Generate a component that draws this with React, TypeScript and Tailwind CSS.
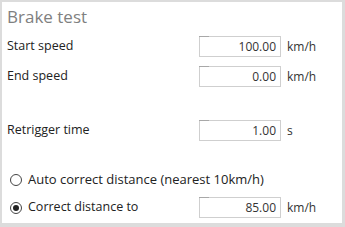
const font = { fontFamily: '"Open Sans", "Noto Sans", sans-serif' };

function NumberField({ value, unit }: { value: string; unit: string }) {
  return (
    <div className="flex items-center">
      <div className="relative w-[82px] h-[21px] border border-[#cfcfcf] bg-white flex items-center justify-end pr-[4px] text-[12px] text-[#333]">
        <span className="absolute left-[-1px] top-[-1px] w-[10px] h-[1px] bg-[#a8a8a8]" />
        {value}
      </div>
      <span className="ml-[6px] text-[12px] text-[#333]">{unit}</span>
    </div>
  );
}

function Row({ label, value, unit, className }: { label: string; value: string; unit: string; className: string }) {
  return (
    <div className={`flex items-center justify-between h-[21px] ${className}`}>
      <span className="text-[12.5px] text-[#222]">{label}</span>
      <div className="w-[138px]">
        <NumberField value={value} unit={unit} />
      </div>
    </div>
  );
}

function Radio({ checked }: { checked: boolean }) {
  return (
    <span className="w-[12px] h-[12px] rounded-full border border-[#444] bg-white flex items-center justify-center">
      {checked && <span className="w-[6px] h-[6px] rounded-full bg-[#222]" />}
    </span>
  );
}

export default function App() {
  return (
    <div className="w-[345px] h-[227px] bg-[#dcdcdc] pt-[2px] pl-[2px] pr-[3px] pb-[4px]" style={font}>
      <div className="w-full h-full bg-white px-[5px]">
        <div className="h-[28px] flex items-end text-[17px] text-[#808080] leading-none pb-[5px]">Brake test</div>
        <Row label="Start speed" value="100.00" unit="km/h" className="mt-[6px]" />
        <Row label="End speed" value="0.00" unit="km/h" className="mt-[9px]" />
        <Row label="Retrigger time" value="1.00" unit="s" className="mt-[33px]" />
        <div className="flex items-center h-[21px] mt-[28px] pl-[3px] gap-[6px]">
          <Radio checked={false} />
          <span className="text-[13px] text-[#222]">Auto correct distance (nearest 10km/h)</span>
        </div>
        <div className="flex items-center justify-between h-[21px] mt-[7px]">
          <div className="flex items-center pl-[3px] gap-[6px]">
            <Radio checked={true} />
            <span className="text-[12.5px] text-[#222]">Correct distance to</span>
          </div>
          <div className="w-[138px]">
            <NumberField value="85.00" unit="km/h" />
          </div>
        </div>
      </div>
    </div>
  );
}
